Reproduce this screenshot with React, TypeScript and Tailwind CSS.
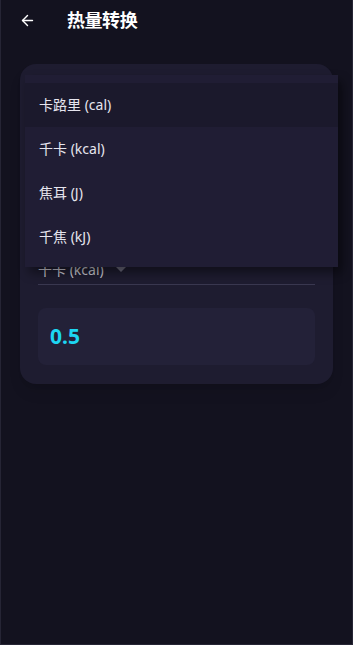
import { ArrowLeft } from 'lucide-react';

const units = ['卡路里 (cal)', '千卡 (kcal)', '焦耳 (J)', '千焦 (kJ)'];

export default function App() {
  return (
    <div
      className="relative w-[353px] h-[645px] bg-[#13121f] border-x border-b border-[#262535] overflow-hidden text-white"
      style={{ fontFamily: '"Noto Sans", "Noto Sans CJK SC", sans-serif' }}
    >
      {/* Header */}
      <header className="flex items-center h-10 pl-[18px]">
        <ArrowLeft className="w-[17px] h-[17px] text-white" strokeWidth={2} />
        <h1 className="ml-[31px] text-[18px] font-bold tracking-tight">热量转换</h1>
      </header>

      {/* Converter card */}
      <div className="mx-[19px] mt-6 rounded-2xl bg-[#1e1c30] p-[18px] pb-[19px] shadow-lg">
        <div className="h-[176px]" />
        <div className="flex items-center gap-2 border-b border-[#3a3850] pt-[2px] pb-1">
          <span className="text-sm text-[#c9c8d2]">千卡 (kcal)</span>
          <svg width="10" height="6" viewBox="0 0 10 6" className="ml-1">
            <path d="M0 0h10L5 5z" fill="#6b6a7c" />
          </svg>
        </div>
        <div className="mt-[23px] h-[57px] rounded-lg bg-[#232138] flex items-center px-3">
          <span className="text-[21px] font-bold text-[#1dd6f2]">0.5</span>
        </div>
      </div>

      {/* Open dropdown menu */}
      <div className="absolute left-[24px] top-[75px] w-[313px] bg-[#201d34] py-2 shadow-[4px_6px_10px_rgba(0,0,0,0.45)]">
        {units.map((u, i) => (
          <div
            key={u}
            className={`h-11 flex items-center pl-[14px] text-sm text-[#e6e5ee] ${i === 0 ? 'bg-[#1b192c]' : ''}`}
          >
            {u}
          </div>
        ))}
      </div>
    </div>
  );
}
